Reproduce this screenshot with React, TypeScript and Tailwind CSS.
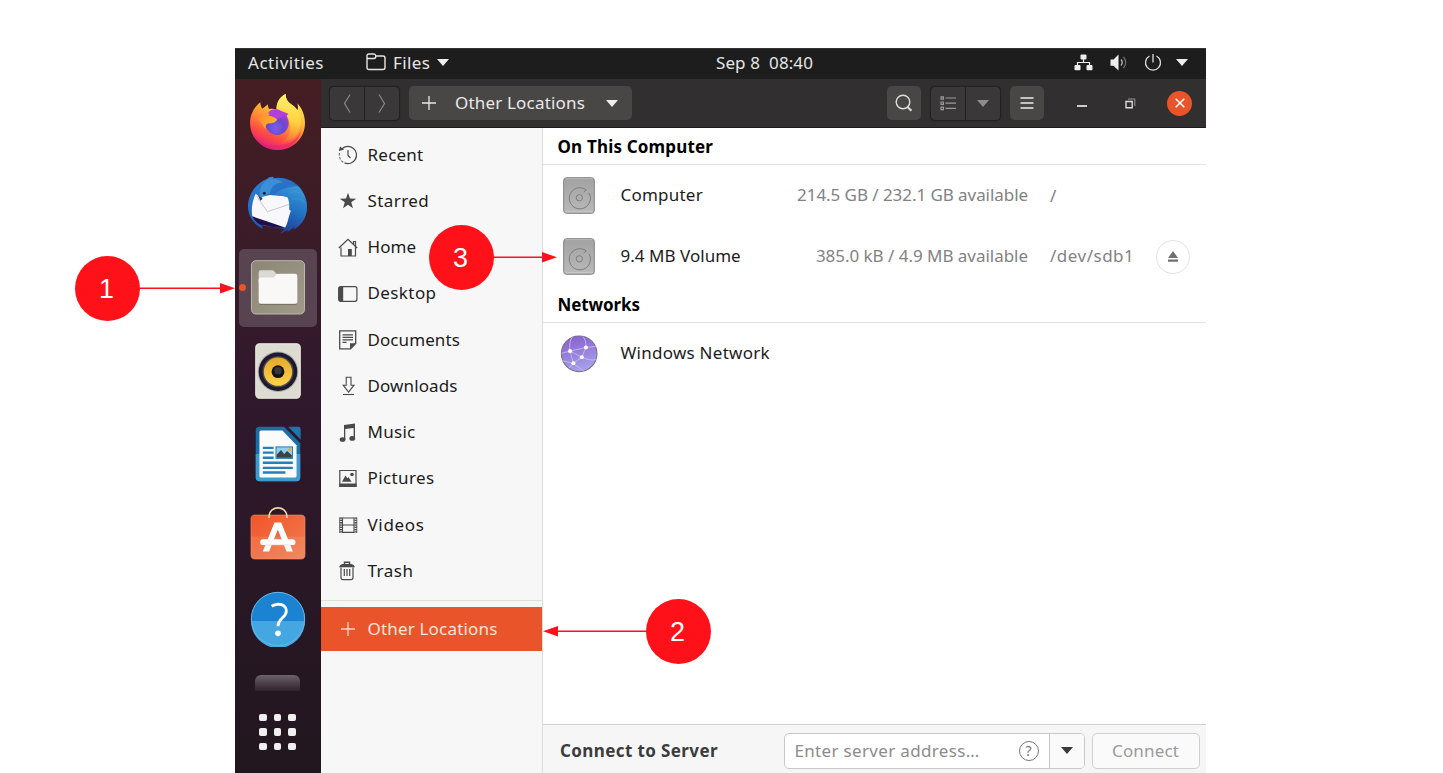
import React from "react";

const ink = "#4a4a4a";

function Firefox() {
  return (
    <svg width="55" height="56" viewBox="60 40 165 168">
      <defs>
        <linearGradient id="ffBody" x1="0.8" y1="0.05" x2="0.35" y2="1">
          <stop offset="0" stopColor="#fff04a" />
          <stop offset="0.3" stopColor="#ffc53a" />
          <stop offset="0.55" stopColor="#ff8a35" />
          <stop offset="0.78" stopColor="#ff4a44" />
          <stop offset="1" stopColor="#e0207c" />
        </linearGradient>
        <linearGradient id="ffFlame" x1="0.6" y1="0" x2="0.5" y2="1">
          <stop offset="0" stopColor="#fff36a" />
          <stop offset="0.55" stopColor="#ffd343" />
          <stop offset="1" stopColor="#ff9233" stopOpacity="0.3" />
        </linearGradient>
        <radialGradient id="ffBall" cx="0.45" cy="0.7" r="0.75">
          <stop offset="0" stopColor="#7a60f0" />
          <stop offset="0.5" stopColor="#6a48cc" />
          <stop offset="1" stopColor="#b53be0" />
        </radialGradient>
        <linearGradient id="ffHead" x1="0" y1="0" x2="1" y2="0.4">
          <stop offset="0" stopColor="#ff8a2c" />
          <stop offset="1" stopColor="#ffb52f" />
        </linearGradient>
      </defs>
      <path d="M91 65C91 74 94 80 97 84L114 71C113 77 115 82 118 85C126 83 133 84 140 87C138 68 149 48 167 40C167 58 176 66 188 74C195 79 199 84 202 89C205 83 204 74 202 68C214 80 225 103 225 127C225 173 188 208 142 208C97 208 60 172 60 127C60 101 73 79 91 65Z" fill="url(#ffBody)" />
      <path d="M140 88C138 68 149 48 167 40C167 58 176 66 188 74C208 89 217 112 211 137C205 165 184 181 160 184C187 165 185 122 168 103C160 95 149 92 140 88Z" fill="url(#ffFlame)" />
      <path d="M72 160C90 194 132 202 174 188C194 181 207 166 214 148C207 187 177 208 142 208C110 208 83 190 72 160Z" fill="#e2207b" opacity="0.6" />
      <circle cx="141" cy="128" r="35" fill="url(#ffBall)" />
      <path d="M114 97C122 84 142 83 154 91C164 96 172 96 177 102C172 101 168 104 172 110C160 104 153 112 141 116Z" fill="#b03fdc" />
      <path d="M83 115C88 104 99 103 108 104C124 105 136 110 142 117C136 126 126 128 116 128C108 130 105 136 107 146C98 138 96 124 83 115Z" fill="url(#ffHead)" />
    </svg>
  );
}

function Thunderbird() {
  return (
    <svg width="59" height="58" viewBox="54 288 177 174">
      <defs>
        <linearGradient id="tbBody" x1="0.2" y1="0" x2="0.8" y2="1">
          <stop offset="0" stopColor="#2f7fd6" />
          <stop offset="0.45" stopColor="#2369bd" />
          <stop offset="1" stopColor="#1f3f8f" />
        </linearGradient>
        <linearGradient id="tbWing" x1="0.7" y1="0" x2="0.4" y2="1">
          <stop offset="0" stopColor="#3a98d8" />
          <stop offset="0.5" stopColor="#2271c2" />
          <stop offset="1" stopColor="#213f92" />
        </linearGradient>
      </defs>
      <path d="M112 296C116 291 123 289 131 291L128 295C180 285 231 323 231 380C231 412 213 437 190 449L196 440L172 456L176 449L150 461L163 447L95 436L99 446C71 434 54 408 54 379C54 343 78 309 112 296Z" fill="url(#tbBody)" />
      <path d="M67 408L100 412L162 444L128 441L101 434L96 436C82 430 73 421 67 408Z" fill="#21104b" />
      <path d="M77 341L90 352L120 345L180 350C186 378 184 412 170 444L67 409C63 390 67 360 77 341Z" fill="#f8f8fa" />
      <path d="M79 347L112 395L178 373" fill="none" stroke="#c9c8cf" strokeWidth="3" />
      <path d="M134 344C146 325 182 321 203 319C216 330 229 351 231 378C232 412 213 438 190 449L197 438L171 456L176 446L150 461C176 441 172 413 184 391C171 396 184 374 172 352C160 347 147 345 134 344Z" fill="url(#tbWing)" />
      <path d="M89 350C86 322 103 296 131 291L127 297C142 297 153 302 158 308C135 307 122 320 120 340L98 350L91 359Z" fill="#3b8fd4" />
      <path d="M172 319C190 315 202 318 212 328M180 338C200 332 214 338 222 350M186 360C204 353 218 358 226 368" fill="none" stroke="#4fb3e8" strokeWidth="2" opacity="0.4" />
      <circle cx="103" cy="340" r="4.500" fill="#10243c" />
      <path d="M84 346L98 356L91 362Z" fill="#253c60" />
    </svg>
  );
}

function FilesApp() {
  return (
    <svg width="54" height="55" viewBox="61 543 162 164">
      <defs>
        <linearGradient id="faBg" x1="0" y1="0" x2="1" y2="1">
          <stop offset="0" stopColor="#8c8676" />
          <stop offset="1" stopColor="#a19a8a" />
        </linearGradient>
      </defs>
      <rect x="62.500" y="544.500" width="159" height="160" rx="13" fill="url(#faBg)" stroke="#bdb7a9" strokeWidth="3" />
      <path d="M84 600V580Q84 573 91 573H124Q128 573 131 577L140 586H180V610H84Z" fill="#dcd9d2" />
      <path d="M84 602Q84 595 91 595H126Q130 595 133 591L136 587Q138 584 142 584H193Q200 584 200 591V667Q200 674 193 674H91Q84 674 84 667Z" fill="#f9f8f6" />
      <path d="M87 676H197" stroke="#7a7466" strokeWidth="3" />
    </svg>
  );
}

function Rhythmbox() {
  return (
    <svg width="46" height="56" viewBox="74 39 136 166">
      <defs>
        <linearGradient id="rbY" x1="0" y1="0" x2="0" y2="1">
          <stop offset="0" stopColor="#e5a92a" />
          <stop offset="1" stopColor="#ffd24a" />
        </linearGradient>
      </defs>
      <rect x="76" y="41" width="132" height="162" rx="11" fill="#dedbd3" stroke="#eeece6" strokeWidth="3" />
      <circle cx="142" cy="124" r="60" fill="#aaa7a5" />
      <circle cx="142" cy="124" r="57" fill="#1c1a2b" />
      <circle cx="142" cy="124" r="46" fill="#4b4a5e" />
      <circle cx="142" cy="124" r="42" fill="url(#rbY)" />
      <circle cx="142" cy="124" r="19" fill="#141414" />
      <circle cx="142" cy="121" r="11" fill="#383838" />
    </svg>
  );
}

function Writer() {
  return (
    <svg width="46" height="56" viewBox="74 287 136 166">
      <path d="M87 289H160L208 338V440Q208 451 197 451H87Q76 451 76 440V300Q76 289 87 289Z" fill="#1a6ea6" />
      <path d="M76 370H208V440Q208 451 197 451H87Q76 451 76 440Z" fill="#3d9ccc" />
      <path d="M172 289H202Q209 289 209 296V327Z" fill="#1a76ad" />
      <path d="M92 300H155L197 344V435Q197 440 192 440H92Q87 440 87 435V305Q87 300 92 300Z" fill="#fbfbfb" />
      <path d="M97 352H129M97 366H129M97 381H129M97 396H186M97 411H186M97 425H164" stroke="#2380b9" strokeWidth="7" />
      <rect x="136" y="349" width="49" height="34" fill="#8fd0f2" stroke="#2380b9" strokeWidth="3" />
      <path d="M138 381V372L151 358L160 370L169 361L183 374V381Z" fill="#3c4143" />
      <circle cx="177" cy="357" r="5" fill="#e8b130" />
    </svg>
  );
}

function Software() {
  return (
    <svg width="56" height="53" viewBox="59 530 167 158">
      <defs>
        <linearGradient id="swBg" x1="0" y1="0" x2="1" y2="1">
          <stop offset="0" stopColor="#f2552a" />
          <stop offset="1" stopColor="#f07c50" />
        </linearGradient>
      </defs>
      <rect x="62" y="554" width="161" height="131" rx="12" fill="url(#swBg)" stroke="#f58a60" strokeWidth="2" />
      <path d="M62 618H223V673Q223 685 211 685H74Q62 685 62 673Z" fill="#fff" opacity="0.09" />
      <path d="M116 563V556C118 525 167 525 169 556V563" fill="none" stroke="#eed7a4" strokeWidth="5" />
      <path d="M132 576H152L187 663H168L142 597L116 663H97Z" fill="#fff" />
      <path d="M98 635H186" stroke="#fff" strokeWidth="17" strokeLinecap="round" />
      <path d="M108 643H176" stroke="#f0c9ba" strokeWidth="2" />
    </svg>
  );
}

function Help() {
  return (
    <svg width="56" height="56" viewBox="58 93 168 168">
      <circle cx="142" cy="177" r="81" fill="#1c82d2" />
      <path d="M61 183A81 81 0 0 0 223 183Z" fill="#45a7e2" />
      <circle cx="142" cy="177" r="80" fill="none" stroke="#69b5e6" strokeWidth="3" />
      <path d="M123 139C135 131 151 131 159 137C168 144 169 156 163 165C156 175 142 181 142 199" fill="none" stroke="#fff" strokeWidth="9" />
      <circle cx="142" cy="220" r="8.500" fill="#fff" />
    </svg>
  );
}

function Caret({ w = 12, h = 7, color = "#eee" }: { w?: number; h?: number; color?: string }) {
  return (
    <svg width={w} height={h} viewBox="0 0 12 7" preserveAspectRatio="none">
      <path d="M0 0H12L6 7Z" fill={color} />
    </svg>
  );
}

function Plus({ color }: { color: string }) {
  return (
    <svg width="14" height="14" viewBox="0 0 14 14">
      <path d="M7 0V14M0 7H14" stroke={color} strokeWidth="1.300" />
    </svg>
  );
}

const sideIcons: Record<string, React.ReactNode> = {
  Recent: (
    <g fill="none" stroke={ink} strokeWidth="1.200">
      <path d="M3.800 4A8.600 8.600 0 1 1 6.500 17.900" />
      <path d="M1.500 8A8.600 8.600 0 0 0 6.500 17.900" strokeDasharray="2.500 1.500" stroke="#777" />
      <path d="M10 5V10.500L12.500 13" />
      <path d="M0.800 6L2 1.500L6 4.800Z" fill={ink} stroke="none" />
    </g>
  ),
  Starred: <path d="M10 1.800L12 7.600L18.200 7.700L13.200 11.300L15 17.200L10 13.700L5 17.200L6.800 11.300L1.800 7.700L8 7.600Z" fill={ink} />,
  Home: (
    <g fill="none" stroke={ink} strokeWidth="1.200">
      <path d="M0.800 10L10 1.300L19.200 10M15.500 6V3.500H17.500V8M3 9.500V18H17.500V9" />
      <path d="M10 11H13.800V18H10Z" fill={ink} stroke="none" />
    </g>
  ),
  Desktop: (
    <g>
      <rect x="0.700" y="2.700" width="18.200" height="14.600" rx="2" fill="none" stroke={ink} strokeWidth="1.200" />
      <path d="M2.500 2.500H5.200V17.500H2.500Q0.500 17.500 0.500 15.500V4.500Q0.500 2.500 2.500 2.500Z" fill={ink} />
    </g>
  ),
  Documents: (
    <g fill="none" stroke={ink} strokeWidth="1.300">
      <path d="M1.700 0.900H17.700V13.500L12.500 18.900H1.700Z" />
      <path d="M4.500 4.800H15M4.500 7.300H15M4.500 9.800H15M4.500 12.300H8.500" />
      <path d="M12 19.200V13.200H18Z" fill={ink} stroke="none" />
    </g>
  ),
  Downloads: (
    <g fill="none" stroke={ink} strokeWidth="1.100">
      <path d="M8.200 1.200H13V9.200H16L10.600 16L5.200 9.200H8.200Z" />
      <path d="M5 18.500H16" />
    </g>
  ),
  Music: (
    <g fill={ink}>
      <path d="M6 2L17 0.500V15.500H15.600V5L7.300 6V16.500H6Z" />
      <ellipse cx="4.600" cy="16.500" rx="2.900" ry="2.300" />
      <ellipse cx="14.300" cy="15.400" rx="2.900" ry="2.300" />
    </g>
  ),
  Pictures: (
    <g>
      <path d="M1.800 1.500H18V17.500H1.800Z" fill="none" stroke={ink} strokeWidth="1.200" />
      <path d="M1.500 14.500H18.500V18H1.500Z" fill={ink} />
      <path d="M4 12.700L7.500 6.500L9.500 9.500L10.500 8L13.500 12.700Z" fill={ink} />
      <circle cx="14" cy="5.500" r="1.800" fill={ink} />
    </g>
  ),
  Videos: (
    <g fill="none" stroke={ink}>
      <path d="M4.500 3H16M4.500 10H16M4.500 17.300H16" strokeWidth="1.200" />
      <path d="M4.500 2.500V18M16 2.500V18" strokeWidth="1.100" />
      <path d="M2.800 2.500V18M17.700 2.500V18" strokeWidth="2.400" strokeDasharray="1.300 1" />
      <path d="M1.700 2.500V18M18.800 2.500V18" strokeWidth="0.800" />
    </g>
  ),
  Trash: (
    <g fill="none" stroke={ink} strokeWidth="1.200">
      <path d="M3 6.500V16.500Q3 18.700 5 18.700H13Q15 18.700 15 16.500V6.500" />
      <path d="M6.300 8V15M9 8V15M11.700 8V15" />
      <path d="M1 6.300Q2 3.200 4.500 3H13.500Q16 3.200 17 6.300Z" fill={ink} stroke="none" />
      <path d="M6.500 3.500V1.300H11.500V3.500" strokeWidth="1.500" />
    </g>
  ),
};

const places = [
  { name: "Recent", tracking: "tracking-[0.24px]" },
  { name: "Starred", tracking: "tracking-[0.4px]" },
  { name: "Home", tracking: "tracking-[0.05px]" },
  { name: "Desktop", tracking: "tracking-[0.41px]" },
  { name: "Documents", tracking: "tracking-[0.08px]" },
  { name: "Downloads", tracking: "tracking-[0.11px]" },
  { name: "Music", tracking: "tracking-[0.28px]" },
  { name: "Pictures", tracking: "tracking-[0.39px]" },
  { name: "Videos", tracking: "tracking-[0.66px]" },
  { name: "Trash", tracking: "tracking-[0.5px]" },
];

function Drive() {
  return (
    <svg width="32" height="37" viewBox="69 140 96 112">
      <defs>
        <linearGradient id="drv" x1="0" y1="0" x2="0" y2="1">
          <stop offset="0" stopColor="#a2a2a2" />
          <stop offset="1" stopColor="#b9b9b9" />
        </linearGradient>
      </defs>
      <rect x="70.500" y="142" width="93" height="108" rx="9" fill="url(#drv)" stroke="#858585" strokeWidth="3" />
      <path d="M76 145H158" stroke="#c6c6c6" strokeWidth="2" />
      <path d="M76 244H158" stroke="#d0d0d0" strokeWidth="2" />
      <path d="M147 188A32 32 0 1 1 139 179L131 186" fill="none" stroke="#7c7c7c" strokeWidth="3" />
      <circle cx="118" cy="203" r="9.500" fill="none" stroke="#7c7c7c" strokeWidth="3" />
    </svg>
  );
}

function NetworkGlobe() {
  return (
    <svg width="38" height="38" viewBox="61 614 113 113">
      <defs>
        <linearGradient id="globe" x1="0.3" y1="0" x2="0.6" y2="1">
          <stop offset="0" stopColor="#8a5fd0" />
          <stop offset="1" stopColor="#a7a4ea" />
        </linearGradient>
      </defs>
      <circle cx="118" cy="670" r="53" fill="url(#globe)" stroke="#75708c" strokeWidth="3" />
      <path d="M91 662C88 645 90 630 98 620M91 662L138 651L167 648M138 651C139 638 136 627 130 619M91 662L126 680L138 651M126 680L101 698L91 662L66 668M126 680C142 688 155 690 168 687M101 698L88 712M101 698C112 708 122 714 132 721M66 690L101 698" fill="none" stroke="#cbbdf0" strokeWidth="2.500" />
      <g fill="#fff">
        <circle cx="91" cy="662" r="6" />
        <circle cx="138" cy="651" r="6" />
        <circle cx="126" cy="680" r="6" />
        <circle cx="101" cy="698" r="6" />
      </g>
    </svg>
  );
}

function Badge({ n }: { n: number }) {
  return (
    <div className="flex size-[65px] shrink-0 items-center justify-center rounded-full bg-[#ff1119] pt-[2px] pr-[2px] font-['Liberation_Sans',sans-serif] text-[27px] leading-none text-white">{n}</div>
  );
}

function Arrow({ length, left = false }: { length: number; left?: boolean }) {
  return (
    <svg width={length} height="13" viewBox={`0 0 ${length} 13`} className={left ? "-scale-x-100" : ""}>
      <path d={`M0 6.300H${length - 12}`} stroke="#ff1119" strokeWidth="1.400" />
      <path d={`M${length - 15} 1.100V11.500L${length} 6.300Z`} fill="#ff1119" />
    </svg>
  );
}

export default function App() {
  return (
    <div className="relative h-[773px] w-[1443px] overflow-hidden bg-white pt-[48px] pl-[235px] font-['Noto_Sans','Open_Sans',sans-serif] text-[17px] leading-none text-[#1c1c1c]">
      <div className="flex h-[725px] w-[971px] flex-col">
        <header className="flex h-[31px] shrink-0 items-center border-t border-[#333] bg-[#1d1d1d] pr-[18px] pb-[4px] pl-[13px] text-[#e6e6e6]">
          <span className="w-[118px] tracking-[0.52px]">Activities</span>
          <svg width="20" height="18" viewBox="0 0 20 18" className="mr-[7px]">
            <path d="M1 14.500V3Q1 1 3 1H8Q9.500 1 9.800 3H17Q19 3 19 5V14.500Q19 16.500 17 16.500H3Q1 16.500 1 14.500ZM1 5.500H8Q9.800 5.500 9.800 3" fill="none" stroke="#e6e6e6" strokeWidth="1.400" />
          </svg>
          <span className="w-[44px] tracking-[0.4px]">Files</span>
          <Caret />
          <span className="ml-[267px] flex-1 whitespace-pre tracking-[0.1px]">Sep 8  08:40</span>
          <svg width="19" height="17" viewBox="0 0 19 17">
            <path d="M9.500 5V8.500M3.500 12V8.500H15.500V12" fill="none" stroke="#eee" strokeWidth="1.200" />
            <rect x="6.500" y="0.500" width="6" height="5" rx="1" fill="#eee" />
            <rect x="0.500" y="11" width="6" height="5.300" rx="1" fill="#eee" />
            <rect x="12.500" y="11" width="6" height="5.300" rx="1" fill="#eee" />
          </svg>
          <svg width="19" height="17" viewBox="0 0 19 17" className="ml-[17px]">
            <path d="M0.500 5.500H3.500L8.500 0.500V16.500L3.500 11.800H0.500Z" fill="#eee" />
            <path d="M11 5.500Q13.500 8.500 11 11.500" fill="none" stroke="#bbb" strokeWidth="1.300" />
            <path d="M13.500 3Q18 8.500 13.500 14" fill="none" stroke="#777" strokeWidth="1.200" />
          </svg>
          <svg width="18" height="17" viewBox="0 0 18 17" className="ml-[15px]">
            <path d="M5.500 2A7.500 7.500 0 1 0 12.500 2M9 0V8.500" fill="none" stroke="#ddd" strokeWidth="1.300" />
          </svg>
          <span className="ml-[14px]"><Caret /></span>
        </header>

        <div className="flex min-h-0 flex-1">
          <nav className="flex w-[86px] shrink-0 flex-col items-center bg-linear-to-b from-[#451e22] via-[#30182d] via-45% to-[#21161e] pt-[2px] pr-[1px]">
            <div className="flex h-[82.800px] items-center pb-[1px]"><Firefox /></div>
            <div className="flex h-[82.800px] items-center"><Thunderbird /></div>
            <div className="flex h-[82.800px] items-center">
              <div className="relative flex size-[78px] items-center justify-center rounded-[5px] bg-[#584351]">
                <FilesApp />
                <i className="absolute top-[35px] left-0 size-[7px] rounded-full bg-[#e9542b]" />
              </div>
            </div>
            <div className="flex h-[82.800px] items-center"><Rhythmbox /></div>
            <div className="flex h-[82.800px] items-center"><Writer /></div>
            <div className="flex h-[82.800px] items-center pb-[6px]"><Software /></div>
            <div className="flex h-[82.800px] items-center pb-[1px]"><Help /></div>
            <div className="mt-[14px] h-[16px] w-[45px] rounded-t-[6px] bg-linear-to-b from-[#6c636a] to-[#30222d]" />
            <div className="mt-[23px] grid grid-cols-3 gap-[7px]">
              {Array.from({ length: 9 }, (_, i) => <i key={i} className="size-[7.500px] rounded-[2px] bg-[#efefef]" />)}
            </div>
          </nav>

          <main className="flex min-w-0 flex-1 flex-col">
            <div className="flex h-[49px] shrink-0 items-center border-b border-[#1d1c1c] bg-[#312f30] pl-[8px] text-[#e8e8e8]">
              <div className="flex h-[35px] w-[71px] rounded-[5px] border border-[#232222] bg-[#3a3838] shadow-[0_0_1px_#1a1a1a]">
                <span className="flex flex-1 items-center justify-center border-r border-[#232222]">
                  <svg width="8" height="19" viewBox="0 0 8 19"><path d="M7 0.500L1.500 9.500L7 18.500" fill="none" stroke="#888" strokeWidth="1.200" /></svg>
                </span>
                <span className="flex flex-1 items-center justify-center">
                  <svg width="8" height="19" viewBox="0 0 8 19"><path d="M1 0.500L6.500 9.500L1 18.500" fill="none" stroke="#888" strokeWidth="1.200" /></svg>
                </span>
              </div>
              <div className="ml-[9px] flex h-[34px] w-[223px] items-center rounded-[5px] bg-[#494745] pl-[13px]">
                <Plus color="#e8e8e8" />
                <span className="ml-[19px] w-[151px] pb-[2px] tracking-[0.18px]">Other Locations</span>
                <Caret />
              </div>
              <div className="ml-[255px] flex size-[34px] items-center justify-center rounded-[5px] bg-[#494745]">
                <svg width="18" height="18" viewBox="0 0 18 18"><circle cx="8" cy="8" r="6.800" fill="none" stroke="#ddd" strokeWidth="1.400" /><path d="M12.500 13L16.500 16.800" stroke="#ddd" strokeWidth="2" /></svg>
              </div>
              <div className="ml-[9px] flex h-[35px] w-[71px] rounded-[5px] border border-[#232222] bg-[#3a3838] shadow-[0_0_1px_#1a1a1a]">
                <span className="flex flex-1 items-center justify-center border-r border-[#232222]">
                  <svg width="16" height="15" viewBox="0 0 16 15" fill="none" stroke="#9a9a9a">
                    <path d="M5.500 2H16M5.500 7.200H16M5.500 12.400H16" strokeWidth="1.200" />
                    <path d="M1 0.800H3.400V3.200H1ZM1 6H3.400V8.400H1ZM1 11.200H3.400V13.600H1Z" strokeWidth="1.200" />
                  </svg>
                </span>
                <span className="flex flex-1 items-center justify-center"><Caret color="#8c8c8c" /></span>
              </div>
              <div className="ml-[9px] flex size-[34px] items-center justify-center rounded-[5px] bg-[#494745]">
                <svg width="14" height="12" viewBox="0 0 14 12"><path d="M0.500 1H13.500M0.500 6H13.500M0.500 11H13.500" stroke="#ededed" strokeWidth="1.300" /></svg>
              </div>
              <i className="mt-[6px] ml-[33px] h-[1.500px] w-[10px] bg-[#ccc]" />
              <svg width="11" height="11" viewBox="0 0 11 11" className="ml-[38px]" fill="none">
                <path d="M1 3.500H7.200V9.700H1Z" stroke="#ddd" strokeWidth="1.400" /><path d="M3 1H9.800V8" stroke="#999" />
              </svg>
              <span className="ml-[31px] flex size-[25px] items-center justify-center rounded-full bg-[#e9542b]">
                <svg width="10" height="10" viewBox="0 0 10 10"><path d="M0.700 0.700L9.300 9.300M9.300 0.700L0.700 9.300" stroke="#fff" strokeWidth="1.500" /></svg>
              </span>
            </div>

            <div className="flex min-h-0 flex-1">
              <aside className="w-[222px] shrink-0 border-r border-[#dcdcdc] bg-[#f7f7f7] pt-[4px]">
                {places.map((p) => (
                  <div key={p.name} className="flex h-[46.250px] items-center pl-[17px]">
                    <svg width="20" height="20" viewBox="0 0 20 20" className="mr-[9.500px]">{sideIcons[p.name]}</svg>
                    <span className={`pb-[2px] ${p.tracking}`}>{p.name}</span>
                  </div>
                ))}
                <div className="mt-[5px] h-px bg-[#dedede]" />
                <div className="mt-[6px] flex h-[44px] items-center bg-[#e9542b] pl-[20px] text-[#ffe4da]">
                  <Plus color="#ffd5c8" />
                  <span className="ml-[12.500px] pb-[1px] tracking-[0.18px]">Other Locations</span>
                </div>
              </aside>

              <section className="flex min-w-0 flex-1 flex-col">
                <h2 className="flex h-[37px] shrink-0 items-center border-b border-[#e3e3e3] pl-[14.500px] font-bold tracking-[0.17px] text-black">On This Computer</h2>
                <div className="flex h-[61px] shrink-0 items-center pl-[20px]">
                  <Drive />
                  <span className="ml-[25.500px] flex-1 pb-[2px] tracking-[0.22px]">Computer</span>
                  <span className="pb-[2px] tracking-[-0.06px] text-[#828282]">214.5 GB / 232.1 GB available</span>
                  <span className="ml-[22px] w-[156px] pb-[1px] text-[#828282]">/</span>
                </div>
                <div className="flex h-[61px] shrink-0 items-center pl-[20px]">
                  <Drive />
                  <span className="ml-[25.500px] flex-1 pb-[2px] tracking-[0.03px]">9.4 MB Volume</span>
                  <span className="pb-[2px] tracking-[-0.03px] text-[#828282]">385.0 kB / 4.9 MB available</span>
                  <span className="ml-[22px] w-[106px] pb-[2px] tracking-[0.5px] text-[#828282]">/dev/sdb1</span>
                  <span className="mr-[16px] flex size-[34px] items-center justify-center rounded-full border border-[#e3e3e3]">
                    <svg width="10" height="11" viewBox="0 0 10 11"><path d="M5 0L10 7H0ZM0 8.500H10V10.700H0Z" fill="#707070" /></svg>
                  </span>
                </div>
                <h2 className="flex h-[36px] shrink-0 items-center border-b border-[#e3e3e3] pl-[14.500px] font-bold tracking-[-0.1px] text-black">Networks</h2>
                <div className="flex h-[61px] shrink-0 items-center pl-[17px]">
                  <NetworkGlobe />
                  <span className="ml-[22.500px] pb-[2px] tracking-[0.26px]">Windows Network</span>
                </div>
                <div className="flex-1" />
                <footer className="flex h-[49px] shrink-0 items-center border-t border-[#cfcfcf] bg-[#f6f6f6] pt-[3px] pl-[17px]">
                  <span className="w-[223.500px] pb-[1px] font-bold tracking-[0.39px] text-[#3c3c3c]">Connect to Server</span>
                  <div className="flex h-[36px] w-[301px] rounded-[5px] border border-[#c8c8c8] bg-white">
                    <div className="flex flex-1 items-center pl-[10px] text-[#8b8b8b]">
                      <span className="flex-1 pb-[1px] tracking-[0.33px] whitespace-nowrap">Enter server address…</span>
                      <span className="mr-[10px] flex size-[20px] items-center justify-center rounded-full border border-[#777] text-[14px] text-[#777]">?</span>
                    </div>
                    <span className="flex w-[35px] items-center justify-center rounded-r-[4px] border-l border-[#c8c8c8] bg-[#fafafa]"><Caret color="#3a3a3a" /></span>
                  </div>
                  <div className="ml-[7px] flex h-[36px] w-[108px] items-center justify-center rounded-[5px] border border-[#cfcfcf] bg-[#fafafa] pb-[1px] tracking-[0.15px] text-[#9b9b9b]">Connect</div>
                </footer>
              </section>
            </div>
          </main>
        </div>
      </div>

      <div className="absolute top-[256px] left-[75px] flex items-center"><Badge n={1} /><Arrow length={95} /></div>
      <div className="absolute top-[599px] left-[543px] flex items-center"><Arrow length={103} left /><Badge n={2} /></div>
      <div className="absolute top-[225px] left-[429px] flex items-center"><Badge n={3} /><Arrow length={63} /></div>
    </div>
  );
}
